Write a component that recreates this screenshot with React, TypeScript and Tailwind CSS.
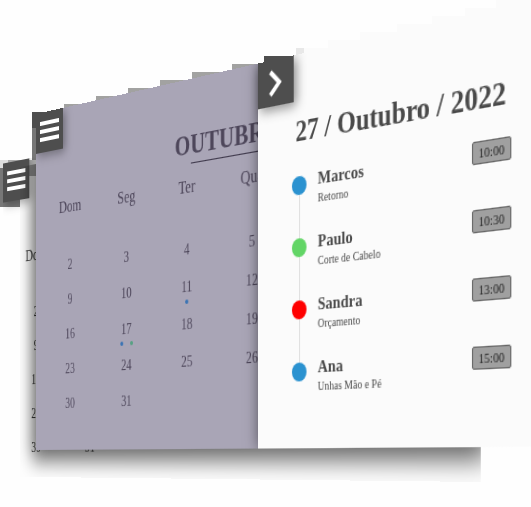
import React from "react";

type Cell = { day: number; dots?: string[] };

const weekdays = ["Dom", "Seg", "Ter", "Qua"];

const weeks: Cell[][] = [
  [{ day: 2 }, { day: 3 }, { day: 4 }, { day: 5 }],
  [{ day: 9 }, { day: 10 }, { day: 11, dots: ["bg-[#3b74b4]"] }, { day: 12 }],
  [{ day: 16 }, { day: 17, dots: ["bg-[#3b74b4]", "bg-[#57a184]"] }, { day: 18 }, { day: 19 }],
  [{ day: 23 }, { day: 24 }, { day: 25 }, { day: 26 }],
  [{ day: 30 }, { day: 31 }],
];

const appointments = [
  { name: "Marcos", service: "Retorno", time: "10:00", color: "bg-[#2b92d0]" },
  { name: "Paulo", service: "Corte de Cabelo", time: "10:30", color: "bg-[#62d566]" },
  { name: "Sandra", service: "Orçamento", time: "13:00", color: "bg-[#ff0000]" },
  { name: "Ana", service: "Unhas Mão e Pé", time: "15:00", color: "bg-[#2b92d0]" },
];

function MenuButton() {
  return (
    <button
      type="button"
      aria-label="Menu"
      className="flex size-10 items-center justify-center bg-[#4e4e4e] shadow-[3px_3px_10px_rgba(0,0,0,0.35)]"
    >
      <svg viewBox="0 0 28 24" className="h-6 w-7" fill="#fff" aria-hidden="true">
        <rect x="0" y="1" width="28" height="4" />
        <rect x="0" y="9" width="28" height="4" />
        <rect x="0" y="17" width="28" height="4" />
      </svg>
    </button>
  );
}

function Calendar() {
  return (
    <>
      <MenuButton />
      <div className="ml-[191px] mt-[6px]">
        <h1 className="whitespace-nowrap text-[25px] font-bold leading-[28px]">OUTUBRO</h1>
        <div className="ml-5 mt-[2px] h-px w-[146px] bg-[#3f394c]" />
      </div>
      <table className="ml-[11px] mt-[11px] w-[312px] table-fixed border-collapse text-center">
        <thead>
          <tr className="h-[50px] align-top">
            {weekdays.map((d) => (
              <th key={d} className="p-0 text-base font-normal leading-5">{d}</th>
            ))}
          </tr>
        </thead>
        <tbody>
          {weeks.map((week) => (
            <tr key={week[0].day} className="h-[34px]">
              {week.map((c) => (
                <td key={c.day} className="relative p-0 text-[14px] leading-4">
                  {c.day}
                  {c.dots && (
                    <span className="absolute inset-x-0 bottom-[2px] flex justify-center gap-[9px]">
                      {c.dots.map((color) => (
                        <i key={color} className={"size-1 rounded-full " + color} />
                      ))}
                    </span>
                  )}
                </td>
              ))}
            </tr>
          ))}
        </tbody>
      </table>
    </>
  );
}

function Agenda() {
  return (
    <section className="relative w-[320px] shrink-0 bg-[#fbfbfb] text-[#4a4a4a] shadow-[0_0_14px_rgba(0,0,0,0.5)] [clip-path:inset(0px_0px_0px_-20px)]">
      <button
        type="button"
        aria-label="Voltar"
        className="flex size-10 items-center justify-center bg-[#4e4e4e] shadow-[3px_3px_10px_rgba(0,0,0,0.45)]"
      >
        <svg viewBox="0 0 24 24" className="size-6" fill="none" stroke="#fff" strokeWidth="4" aria-hidden="true">
          <path d="M6 2l10 10L6 22" />
        </svg>
      </button>
      <h2 className="ml-[42px] mt-3 whitespace-nowrap text-[25px] font-bold leading-[28px]">27 / Outubro / 2022</h2>
      <ul className="ml-[38px] mt-[19px] w-[215px]">
        {appointments.map((a) => (
          <li key={a.name} className="group flex h-[53px] items-start">
            <div className="flex w-4 flex-col items-center self-stretch pt-[5px]">
              <span className={"size-4 shrink-0 rounded-full " + a.color} />
              <span className="-mb-[5px] w-px grow bg-[#dcdcdc] group-last:hidden" />
            </div>
            <div className="ml-3 grow">
              <h3 className="text-[15px] font-bold leading-[18px]">{a.name}</h3>
              <p className="text-[10px] leading-4">{a.service}</p>
            </div>
            <time className="flex h-[18px] w-[35px] items-center justify-center rounded-[2px] border border-[#666] bg-[#a0a0a0] text-[10px] text-[#222]">
              {a.time}
            </time>
          </li>
        ))}
      </ul>
    </section>
  );
}

export default function App() {
  return (
    <main className="relative min-h-screen overflow-hidden bg-[#fefefe] font-['Liberation_Serif',serif] [perspective:1470px] [perspective-origin:265px_460px]">
      <svg className="absolute left-0 top-0 h-[507px] w-[531px]" viewBox="0 0 531 507" shapeRendering="crispEdges" aria-hidden="true">
        <path d="M64 130V104H96V96H128V88H160V80H192V72H232V64H270V130Z" fill="#a2a2a1" />
        <path d="M296 90V48H328V40H360V32H397V24H432V16H465V8H496V0H531V90Z" fill="#fbfbfb" />
        <path d="M296 48h8v8h-8Z" fill="#e8e8e8" />
        <path d="M32 112H64V150H32ZM264 56H295V100H264Z" fill="#4e4e4e" />
        <path d="M32 128h4v32h-4Z" fill="#777" />
        <path d="M0 160H32V168H0Z" fill="#dedede" />
        <path d="M8 160H36V176H8Z" fill="#a8a8a8" />
        <path d="M0 168H20V207H0Z" fill="#777" />
      </svg>
      <div className="relative ml-9 mt-[114px] w-[611px] origin-left [transform:rotateY(-40deg)]">
        <div className="absolute -left-[50px] top-[43px] h-[320px] w-[291px] overflow-hidden text-[#333]">
          <Calendar />
        </div>
        <div
          className="absolute left-0 top-0 h-full w-[517px] shadow-[0_4px_20px_6px_rgba(0,0,0,0.6)] [clip-path:inset(50px_0px_-27px_-24px)]"
        />
        <div className="relative flex h-[336px]">
          <section className="w-[291px] shrink-0 overflow-hidden bg-[#a9a5b6] text-[#4d465a]">
            <Calendar />
          </section>
          <Agenda />
        </div>
      </div>
    </main>
  );
}
